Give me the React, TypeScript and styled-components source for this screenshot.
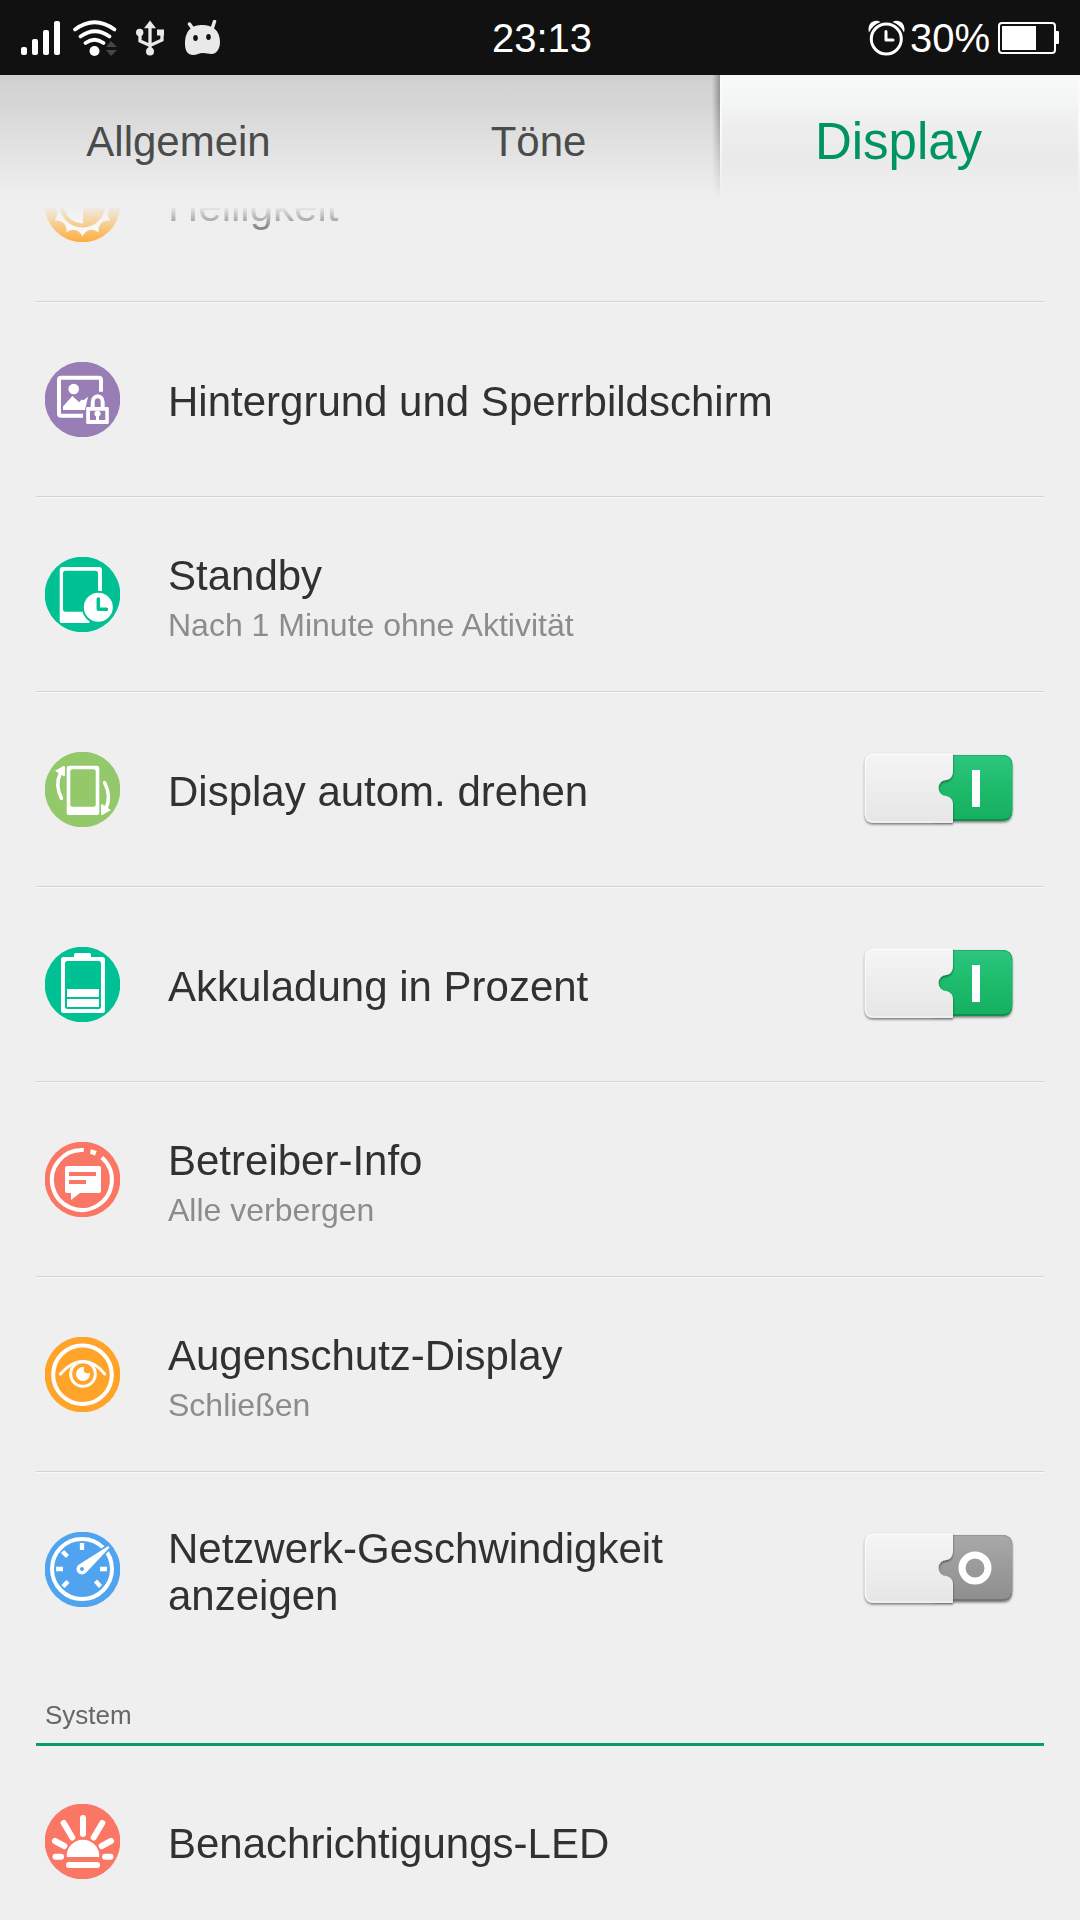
import React, { useState } from "react";
import styled, { createGlobalStyle, css } from "styled-components";

const GlobalStyle = createGlobalStyle`
  *, *::before, *::after { box-sizing: border-box; }
  body {
    margin: 0;
    background: #efefef;
    color: #303231;
    font-family: "Liberation Sans", Arial, Helvetica, sans-serif;
  }
  button { font-family: inherit; color: inherit; }
`;

const Screen = styled.div`
  display: flex;
  flex-direction: column;
  height: 100vh;
  overflow: hidden;
`;

const StatusBar = styled.header`
  display: grid;
  grid-template-columns: 1fr auto 1fr;
  align-items: center;
  flex: none;
  height: 75px;
  padding: 0 16px 0 20px;
  background: #111111;
  color: #ffffff;
  font-size: 40px;
  line-height: 44px;
`;

const StatusGroup = styled.div<{ $end?: boolean; $gap: number }>`
  display: flex;
  align-items: center;
  justify-content: ${(p) => (p.$end ? "flex-end" : "flex-start")};
  gap: ${(p) => p.$gap}px;
`;

const Glyph = styled.svg`
  display: block;
  flex: none;
`;

const Tabs = styled.nav`
  display: grid;
  grid-template-columns: repeat(3, 1fr);
  flex: none;
  height: 133px;
  background: linear-gradient(#d0d0d0 0, #d6d6d6 28px, #e4e4e4 80px, #efefef 122px);
`;

const activeTab = css`
  background: linear-gradient(#f7faf9 0, #f3f6f5 30px, #eeeeee 50px, #eaeaea 86px, #efefef 122px);
  color: #009460;
  font-size: 51px;

  &::before {
    content: "";
    position: absolute;
    top: 0;
    bottom: 0;
    left: -8px;
    width: 8px;
    background: linear-gradient(to right, transparent, rgba(0, 0, 0, 0.3));
    mask-image: linear-gradient(#000 20%, transparent 95%);
  }

  &::after {
    content: "";
    position: absolute;
    inset: 0;
    border: solid #fbfbfb;
    border-width: 0 2px;
    mask-image: linear-gradient(#000 40%, transparent 95%);
  }
`;

const Tab = styled.button<{ $active: boolean }>`
  position: relative;
  padding: 0 3px 0 0;
  border: 0;
  background: none;
  color: #4a4c4b;
  font-size: 42px;
  ${(p) => p.$active && activeTab}
`;

const Viewport = styled.main`
  flex: 1;
  min-height: 0;
  overflow: hidden;
  mask-image: linear-gradient(rgba(0, 0, 0, 0.05), #000 38px);
`;

const Content = styled.div`
  margin-top: -101px;
  padding: 0 36px;
`;

const rowStyle = css`
  display: flex;
  align-items: center;
  width: 100%;
  height: 195px;
  padding: 0 28px 0 9px;
  border: 0;
  background: none;
  text-align: left;
`;

const List = styled.ul`
  margin: 0;
  padding: 0;
  list-style: none;
`;

const Item = styled.li`
  & + & {
    box-shadow: 0 -1px #d3d3d3, inset 0 1px #f8f8f8;
  }
`;

const RowButton = styled.button`
  ${rowStyle}
`;

const RowLabel = styled.label`
  ${rowStyle}
`;

const Texts = styled.span`
  display: flex;
  flex: 1;
  flex-direction: column;
  gap: 9px;
  min-width: 0;
  margin-left: 48px;
  padding: 4px 40px 0 0;
`;

const Title = styled.span`
  font-size: 42px;
  line-height: 47px;
`;

const Summary = styled.span`
  color: #8b8d8c;
  font-size: 32px;
  line-height: 34px;
`;

const SectionTitle = styled.h2`
  display: flex;
  align-items: center;
  height: 79px;
  margin: 0 0 -2px;
  padding: 20px 9px 0;
  border-bottom: 3px solid #0c9b68;
  color: #656766;
  font-size: 26px;
  font-weight: 400;
  line-height: 30px;
`;

const SwitchInput = styled.input`
  position: absolute;
  width: 1px;
  height: 1px;
  margin: 0;
  opacity: 0;
`;

const SwitchBox = styled.span`
  position: relative;
  flex: none;
`;

type IconName = "sun" | "wallpaper" | "standby" | "rotate" | "battery" | "carrier" | "eye" | "speed" | "led";

const iconColors: Record<IconName, string> = {
  sun: "#ffa628",
  wallpaper: "#987eb5",
  standby: "#00c194",
  rotate: "#93c86b",
  battery: "#00c194",
  carrier: "#fb7765",
  eye: "#ffa428",
  speed: "#50a3ef",
  led: "#fb7765",
};

const starPath = (() => {
  let d = "";
  for (let i = 0; i < 12; i++) {
    const tip = (i * Math.PI) / 6;
    const next = tip + Math.PI / 6;
    const mid = tip + Math.PI / 12;
    const at = (a: number, r: number) =>
      `${(37.5 + r * Math.sin(a)).toFixed(2)} ${(37.5 + r * Math.cos(a)).toFixed(2)}`;
    d += i === 0 ? `M${at(tip, 32)}` : "";
    d += `Q${at(mid, 22)} ${at(next, 32)}`;
  }
  return d + "Z";
})();

function iconArt(name: IconName, c: string) {
  switch (name) {
    case "sun":
      return (
        <>
          <path d={starPath} fill="#fff" />
          <circle cx="37.5" cy="37.5" r="23" fill={c} />
          <path d="M38 18.5V56.5A19 19 0 0 1 38 18.5Z" fill="#fff" />
        </>
      );
    case "wallpaper":
      return (
        <>
          <path d="M56 29.7V18q0-2.3-2.3-2.3H16.3Q14 15.7 14 18V51.5q0 2.3 2.3 2.3H38" fill="none" stroke="#fff" strokeWidth="4" />
          <circle cx="28.7" cy="27" r="5.3" fill="#fff" />
          <path d="M18 48V44.5L27.3 34L34.3 40.2L36.5 37.5L38.5 38.3L43 34.7L40 48Z" fill="#fff" />
          <path d="M47.7 46V40.5a5 6.2 0 0 1 10 0V46" fill="none" stroke="#fff" strokeWidth="4" />
          <path fillRule="evenodd" d="M42.5 45H62.5q1.3 0 1.3 1.3V60.7q0 1.3-1.3 1.3H42.5q-1.3 0-1.3-1.3V46.3Q41.2 45 42.5 45ZM45 48.7V58H60.3V48.7Z" fill="#fff" />
          <path d="M52.5 48.7a3 3 0 0 1 1.5 5.7V58H51V54.4a3 3 0 0 1 1.5-5.7Z" fill="#fff" />
        </>
      );
    case "standby":
      return (
        <>
          <path fillRule="evenodd" d="M17.5 10H54q3 0 3 3V63q0 3-3 3H16.7q-2 0-2-2V13q0-3 2.8-3ZM20.5 13.8q-2.5 0-2.5 2.5V52.5q0 2.200 2.500 2.200H50.700q2.300 0 2.300-2.200V16.300q0-2.500-2.300-2.500Z" fill="#fff" />
          <path d="M44 67H60V34H53Z" fill={c} />
          <circle cx="53.3" cy="50.3" r="16.5" fill={c} />
          <circle cx="53.3" cy="50.3" r="14.5" fill="#fff" />
          <path d="M53.3 42V52.3H61.5" fill="none" stroke={c} strokeWidth="3.5" strokeLinecap="round" strokeLinejoin="round" />
        </>
      );
    case "rotate":
      return (
        <>
          <path fillRule="evenodd" d="M24.500 13.700H51.500q2.800 0 2.800 2.800V61q0 2-2 2H23.700q-2 0-2-2V16.500q0-2.800 2.800-2.800ZM27.300 17.300q-2 0-2 2V52.700q0 2 2 2H48.700q2 0 2-2V19.300q0-2-2-2Z" fill="#fff" />
          <path d="M16.5 46.5Q9.5 33 15.5 21M59.5 30.5Q66.500 44 61 56.500" fill="none" stroke="#fff" strokeWidth="3.500" strokeLinecap="round" />
          <path d="M10 18.700L19 13.700L20 14.500V23.500L19 24.500ZM66 58L57 63.200L56 62.500V53L57 52Z" fill="#fff" />
        </>
      );
    case "battery":
      return (
        <>
          <path d="M29 10V7.500Q29 6 30.500 6H44.500Q46 6 46 7.500V10Z" fill="#fff" />
          <path fillRule="evenodd" d="M18.500 10H57.500Q60 10 60 12.500V63.500Q60 66 57.500 66H18.500Q16 66 16 63.500V12.500Q16 10 18.500 10ZM22.500 14Q20 14 20 16.500V59.500Q20 62 22.500 62H53.500Q56 62 56 59.500V16.500Q56 14 53.500 14Z" fill="#fff" />
          <path d="M22 42H54V50H22ZM22 52H54V60H22Z" fill="#fff" />
        </>
      );
    case "carrier":
      return (
        <>
          <path d="M38.800 8A30 30 0 1 0 56.800 15.500" fill="none" stroke="#fff" strokeWidth="4" />
          <path d="M46 7.200L51.700 9L50 13.500L45 11.700Z" fill="#fff" />
          <path d="M22 24H54Q56 24 56 26V49Q56 51 54 51H35L26 58V51H22Q20 51 20 49V26Q20 24 22 24Z" fill="#fff" />
          <path d="M24 30H51V34H24ZM24 38H41V42H24Z" fill={c} />
        </>
      );
    case "eye":
      return (
        <>
          <circle cx="37.5" cy="37.7" r="29.3" fill="none" stroke="#fff" strokeWidth="4" />
          <path d="M15.500 37Q26 24.500 38 24.500T59.700 37" fill="none" stroke="#fff" strokeWidth="3" strokeLinecap="round" />
          <circle cx="38" cy="37" r="12.3" fill="none" stroke="#fff" strokeWidth="3" />
          <circle cx="38" cy="37" r="7" fill="#fff" />
          <circle cx="42.5" cy="32.5" r="3.8" fill={c} />
        </>
      );
    case "speed":
      return (
        <>
          <circle cx="37" cy="37" r="30" fill="none" stroke="#fff" strokeWidth="4" />
          <path d="M37 11V18M11 37H18M55 37H62M17.500 19.500L22.500 24.500M18 54.500L23 49.500M50.500 49L55.500 54.500" stroke="#fff" strokeWidth="4.300" />
          <path d="M33.600 32.700L63 14.200Q65 14 64 16.200L41 40.800A5.500 5.500 0 1 1 33.600 32.700Z" fill="#fff" stroke={c} strokeWidth="3.500" paintOrder="stroke" />
          <circle cx="37" cy="37" r="2" fill={c} />
        </>
      );
    case "led":
      return (
        <>
          <path d="M38 14V30M18.700 19L27.300 33.500M57.300 19L48.700 33.500M10 37L19.300 42M66 37L56.700 42M10.500 52.700H16M60 52.700H65.500M24 61H52" stroke="#fff" strokeWidth="6" strokeLinecap="round" />
          <path d="M22.500 53Q21.700 53 21.700 52A16.300 16.300 0 0 1 54.300 52Q54.300 53 53.500 53Z" fill="#fff" />
        </>
      );
  }
}

function RowIcon({ name }: { name: IconName }) {
  const c = iconColors[name];
  return (
    <Glyph width="75" height="75" viewBox="0 0 75 75" aria-hidden="true">
      <circle cx="37.5" cy="37.5" r="37.8" fill={c} />
      {iconArt(name, c)}
    </Glyph>
  );
}

function SwitchArt({ on, id }: { on: boolean; id: string }) {
  const thumb = "M12 2.500H91V20Q91 27.500 84.500 29A8 8 0 0 0 84.500 45Q91 47 91 53V72H12Q2.700 72 2.700 63V12Q2.700 2.500 12 2.500Z";
  const base = "M72 4H140Q150.300 4 150.300 14V60Q150.300 70 140 70H72Z";
  return (
    <Glyph width="154" height="78" viewBox="0 0 154 78" aria-hidden="true">
      <defs>
        <linearGradient id={`${id}-base`} x1="0" y1="0" x2="0" y2="1">
          <stop offset="0" stopColor={on ? "#2cc67e" : "#a9a9a9"} />
          <stop offset="0.5" stopColor={on ? "#1ebb6c" : "#9b9b9b"} />
          <stop offset="1" stopColor={on ? "#16b061" : "#8f8f8f"} />
        </linearGradient>
        <linearGradient id={`${id}-thumb`} x1="0" y1="0" x2="0" y2="1">
          <stop offset="0" stopColor="#f5f5f5" />
          <stop offset="1" stopColor="#e6e6e6" />
        </linearGradient>
        <filter id={`${id}-shadow`} x="-10%" y="-10%" width="120%" height="130%">
          <feDropShadow dx="0" dy="1.5" stdDeviation="1.3" floodOpacity="0.5" />
        </filter>
      </defs>
      <path d={base} fill={on ? "#0f8f4d" : "#747474"} filter={`url(#${id}-shadow)`} />
      <path d="M72 4H140Q150.300 4 150.300 14V58Q150.300 68 140 68H72Z" fill={`url(#${id}-base)`} />
      <path d="M72 4.500H140Q149.800 4.500 149.800 14" fill="none" stroke={on ? "#1fae69" : "#969696"} />
      {on ? (
        <path d="M110 19H118V56H110Z" fill="#fff" />
      ) : (
        <circle cx="113" cy="37" r="13" fill="none" stroke="#fff" strokeWidth="7" />
      )}
      <path d={thumb} fill={`url(#${id}-thumb)`} filter={`url(#${id}-shadow)`} />
      <path d="M90 3.300H12Q3.500 3.300 3.500 12V63Q3.500 70.500 12 71H90" fill="none" stroke="#fff" strokeOpacity="0.7" />
    </Glyph>
  );
}

function LinkRow({ icon, title, summary }: { icon: IconName; title: string; summary?: string }) {
  return (
    <Item>
      <RowButton type="button">
        <RowIcon name={icon} />
        <Texts>
          <Title>{title}</Title>
          {summary && <Summary>{summary}</Summary>}
        </Texts>
      </RowButton>
    </Item>
  );
}

function SwitchRow({ icon, title, initial }: { icon: IconName; title: string; initial: boolean }) {
  const [on, setOn] = useState(initial);
  const id = `switch-${icon}`;
  return (
    <Item>
      <RowLabel htmlFor={id}>
        <RowIcon name={icon} />
        <Texts>
          <Title>{title}</Title>
        </Texts>
        <SwitchBox>
          <SwitchInput id={id} type="checkbox" checked={on} onChange={(e) => setOn(e.target.checked)} />
          <SwitchArt on={on} id={id} />
        </SwitchBox>
      </RowLabel>
    </Item>
  );
}

function SystemIcons() {
  return (
    <StatusGroup $gap={12}>
      <Glyph width="41" height="36" viewBox="0 0 41 36" aria-hidden="true">
        <g fill="#fff">
          <rect x="1" y="27" width="6" height="8" rx="2" />
          <rect x="12" y="19" width="6" height="16" rx="2" />
          <rect x="23" y="10" width="6" height="25" rx="2" />
          <rect x="34" y="1" width="6" height="34" rx="2" />
        </g>
      </Glyph>
      <Glyph width="46" height="36" viewBox="0 0 46 36" aria-hidden="true">
        <path d="M2 9.500Q21.500-5 41.500 9.500M7.500 16.500Q22 6 36.500 16.500M12.500 23Q21.500 16.500 30.500 23" fill="none" stroke="#fff" strokeWidth="3.700" strokeLinecap="round" />
        <circle cx="21.500" cy="31" r="5" fill="#fff" />
        <path d="M38 21L44 27H33ZM33 30H44L38 36Z" fill="#474747" />
      </Glyph>
      <Glyph width="41" height="36" viewBox="-5 0 41 36" aria-hidden="true">
        <path d="M14 6V30M4 12V21L14 25.500L26 20V12" fill="none" stroke="#e9e9e9" strokeWidth="3.300" />
        <path d="M14 .500L20 8.200H8ZM21 9.500H28V15.500H21Z" fill="#e9e9e9" />
        <circle cx="3.700" cy="12.500" r="3.700" fill="#e9e9e9" />
        <circle cx="14" cy="31.500" r="4" fill="#e9e9e9" />
      </Glyph>
      <Glyph width="38" height="36" viewBox="0 0 38 36" aria-hidden="true">
        <path d="M5.500 4L9 9M30.500 1.500L28 9" stroke="#e9e9e9" strokeWidth="3.500" strokeLinecap="round" />
        <path d="M18.500 5C28 5 36 10 36 22C36 29.500 32 34 27.500 34C24 34 23 33 19 33C15 33 13 35 9 35C4 35 1 31 1 24C1 10 8 5 18.500 5Z" fill="#e9e9e9" />
        <ellipse cx="11.500" cy="18" rx="2.300" ry="3" fill="#111" />
        <ellipse cx="24.500" cy="17" rx="2.300" ry="3" fill="#111" />
      </Glyph>
    </StatusGroup>
  );
}

function PowerIcons() {
  return (
    <StatusGroup $end $gap={5}>
      <Glyph width="37" height="36" viewBox="0 0 37 36" aria-hidden="true">
        <circle cx="18.300" cy="19" r="15" fill="none" stroke="#fff" strokeWidth="3" />
        <path d="M18 11.500V20H25" fill="none" stroke="#fff" strokeWidth="3" strokeLinecap="round" strokeLinejoin="round" />
        <path d="M1 12.500C-1.500 4 6-2 12.500 2Q4.500 5 1 12.500ZM36 12.500C38.500 4 31-2 24.500 2Q32.500 5 36 12.500Z" fill="#fff" />
      </Glyph>
      <span>30%</span>
      <Glyph width="69" height="36" viewBox="0 0 69 36" aria-hidden="true">
        <rect x="4" y="3" width="56" height="30" rx="3" fill="none" stroke="#fff" strokeWidth="2" />
        <path d="M7 6H41V30H7ZM61 11H63Q64 11 64 12V23Q64 24 63 24H61Z" fill="#fff" />
      </Glyph>
    </StatusGroup>
  );
}

const tabs = ["Allgemein", "Töne", "Display"];

export default function App() {
  const [active, setActive] = useState("Display");
  return (
    <>
      <GlobalStyle />
      <Screen>
        <StatusBar>
          <SystemIcons />
          <span>23:13</span>
          <PowerIcons />
        </StatusBar>
        <Tabs>
          {tabs.map((name) => (
            <Tab key={name} type="button" $active={name === active} onClick={() => setActive(name)}>
              {name}
            </Tab>
          ))}
        </Tabs>
        <Viewport>
          <Content>
            <List>
              <LinkRow icon="sun" title="Helligkeit" />
              <LinkRow icon="wallpaper" title="Hintergrund und Sperrbildschirm" />
              <LinkRow icon="standby" title="Standby" summary="Nach 1 Minute ohne Aktivität" />
              <SwitchRow icon="rotate" title="Display autom. drehen" initial={true} />
              <SwitchRow icon="battery" title="Akkuladung in Prozent" initial={true} />
              <LinkRow icon="carrier" title="Betreiber-Info" summary="Alle verbergen" />
              <LinkRow icon="eye" title="Augenschutz-Display" summary="Schließen" />
              <SwitchRow icon="speed" title="Netzwerk-Geschwindigkeit anzeigen" initial={false} />
            </List>
            <SectionTitle>System</SectionTitle>
            <List>
              <LinkRow icon="led" title="Benachrichtigungs-LED" />
            </List>
          </Content>
        </Viewport>
      </Screen>
    </>
  );
}
